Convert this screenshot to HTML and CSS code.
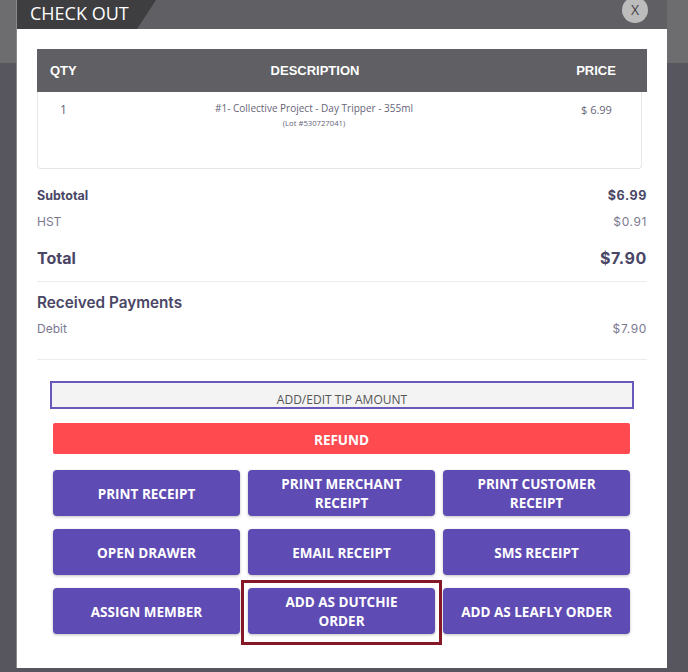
FILE: index.html
```html
<!DOCTYPE html>
<html lang="en">
<head>
  <meta charset="UTF-8">
  <meta name="viewport" content="width=device-width, initial-scale=1.0">
  <title>Check Out</title>
  <link rel="stylesheet" href="styles.css">
</head>
<body>
  <div class="modal">
    <div class="modal-header">
      <div class="tab">CHECK OUT</div>
      <button class="close">X</button>
    </div>

    <div class="modal-body">
      <div class="table-head">
        <span class="qty">QTY</span>
        <span class="desc">DESCRIPTION</span>
        <span class="price">PRICE</span>
      </div>
      <div class="table-row">
        <span class="qty">1</span>
        <div class="desc">
          <div class="item-name">#1- Collective Project - Day Tripper - 355ml</div>
          <div class="lot">(Lot #530727041)</div>
        </div>
        <span class="price">$ 6.99</span>
      </div>

      <div class="totals">
        <div class="line strong">
          <span>Subtotal</span>
          <span class="amount">$6.99</span>
        </div>
        <div class="line light">
          <span>HST</span>
          <span class="amount">$0.91</span>
        </div>
        <div class="line total">
          <span>Total</span>
          <span class="amount">$7.90</span>
        </div>
      </div>

      <div class="payments">
        <div class="payments-title">Received Payments</div>
        <div class="line light">
          <span>Debit</span>
          <span class="amount">$7.90</span>
        </div>
      </div>

      <button class="tip">ADD/EDIT TIP AMOUNT</button>
      <button class="refund">REFUND</button>

      <div class="actions">
        <button class="action">PRINT RECEIPT</button>
        <button class="action">PRINT MERCHANT<br>RECEIPT</button>
        <button class="action">PRINT CUSTOMER<br>RECEIPT</button>
        <button class="action">OPEN DRAWER</button>
        <button class="action">EMAIL RECEIPT</button>
        <button class="action">SMS RECEIPT</button>
        <button class="action">ASSIGN MEMBER</button>
        <div class="marked">
          <button class="action">ADD AS DUTCHIE<br>ORDER</button>
        </div>
        <button class="action">ADD AS LEAFLY ORDER</button>
      </div>
    </div>
  </div>
</body>
</html>
```

FILE: styles.css
```css
* {
  box-sizing: border-box;
  margin: 0;
  padding: 0;
}
body {
  width: 688px;
  height: 672px;
  overflow: hidden;
  background: linear-gradient(to bottom, #6d6c6e 0, #6d6c6e 63px, #57555d 63px);
  font-family: 'Open Sans', sans-serif;
}
.modal {
  margin-left: 16px;
  width: 651px;
  height: 668px;
  background: #fff;
  border-left: 1px solid #8a8a8a;
}
.modal-header {
  position: relative;
  height: 29px;
  background: #605f63;
}
.tab {
  width: 139px;
  height: 29px;
  padding-left: 13px;
  background: #3e3e40;
  color: #fff;
  font-size: 18px;
  line-height: 27px;
  clip-path: polygon(0 0, 100% 0, calc(100% - 19px) 100%, 0 100%);
}
.close {
  position: absolute;
  top: -3px;
  left: 605px;
  width: 26px;
  height: 26px;
  border: none;
  border-radius: 50%;
  background: #bdbcbd;
  color: #444;
  font-family: 'Open Sans', sans-serif;
  font-size: 14px;
  line-height: 26px;
}
.modal-body {
  padding: 20px 20px 0 20px;
}

/* items table */
.table-head,
.table-row {
  display: grid;
  grid-template-columns: 60px 440px 1fr;
}
.table-head {
  height: 43px;
  align-items: center;
  background: #605f63;
  color: #fff;
  font-family: 'Liberation Sans', Arial, sans-serif;
  font-weight: bold;
  font-size: 13px;
}
.table-head .qty { padding-left: 13px; }
.table-head .desc { text-align: center; padding-right: 4px; }
.table-head .price { text-align: center; padding-left: 8px; }
.table-row {
  width: 605px;
  height: 77px;
  padding-top: 9px;
  border: 1px solid #e6e6e6;
  border-top: none;
  border-radius: 0 0 4px 4px;
  color: #666478;
}
.table-row .qty {
  padding-left: 22px;
  font-size: 12px;
}
.table-row .desc { text-align: center; padding-right: 8px; }
.item-name { font-size: 10px; line-height: 14px; }
.lot { font-size: 7.7px; line-height: 16px; }
.table-row .price {
  padding-left: 43px;
  font-size: 11px;
  padding-top: 1px;
}

/* totals */
.totals {
  padding-top: 13px;
  border-bottom: 1px solid #ececec;
}
.line {
  display: flex;
  justify-content: space-between;
  align-items: center;
  height: 26px;
  font-family: Inter, sans-serif;
  font-size: 12px;
  color: #7b7890;
}
.line .amount {
  letter-spacing: 0.6px;
}
.line.strong {
  color: #4a4666;
  font-weight: 700;
  font-size: 12.5px;
}
.line.total {
  height: 47px;
  color: #4a4666;
  font-weight: 700;
  font-size: 16px;
}
.payments {
  padding: 9px 0 18px;
  border-bottom: 1px solid #ececec;
}
.payments-title {
  height: 24px;
  line-height: 24px;
  font-family: Inter, sans-serif;
  font-size: 15.3px;
  font-weight: 600;
  color: #4a4666;
}

/* buttons */
.tip {
  display: block;
  width: 584px;
  height: 28px;
  margin: 21px 0 0 13px;
  padding-top: 8px;
  border: 2px solid #6a57bb;
  background: #f3f3f3;
  color: #555;
  font-family: 'Open Sans', sans-serif;
  font-size: 12px;
}
.refund {
  display: block;
  width: 577px;
  height: 31px;
  margin: 14px 0 0 16px;
  padding-top: 2px;
  border: none;
  border-radius: 2px;
  background: #ff4a50;
  color: #fff;
  font-family: 'Open Sans', sans-serif;
  font-weight: 700;
  font-size: 13.5px;
}
.actions {
  display: grid;
  grid-template-columns: repeat(3, 187px);
  grid-auto-rows: 46px;
  column-gap: 8px;
  row-gap: 13px;
  margin: 16px 0 0 16px;
}
.action {
  width: 100%;
  height: 46px;
  padding-top: 2px;
  border: none;
  border-radius: 4px;
  background: #5e4bb3;
  box-shadow: 0 1px 3px rgba(0, 0, 0, 0.25);
  color: #fff;
  font-family: 'Open Sans', sans-serif;
  font-weight: 700;
  font-size: 13.5px;
  line-height: 19px;
}
.marked {
  position: relative;
}
.marked::after {
  content: '';
  position: absolute;
  left: -7px;
  top: -8px;
  right: -7px;
  bottom: -11px;
  border: 3px solid #861727;
}
```
